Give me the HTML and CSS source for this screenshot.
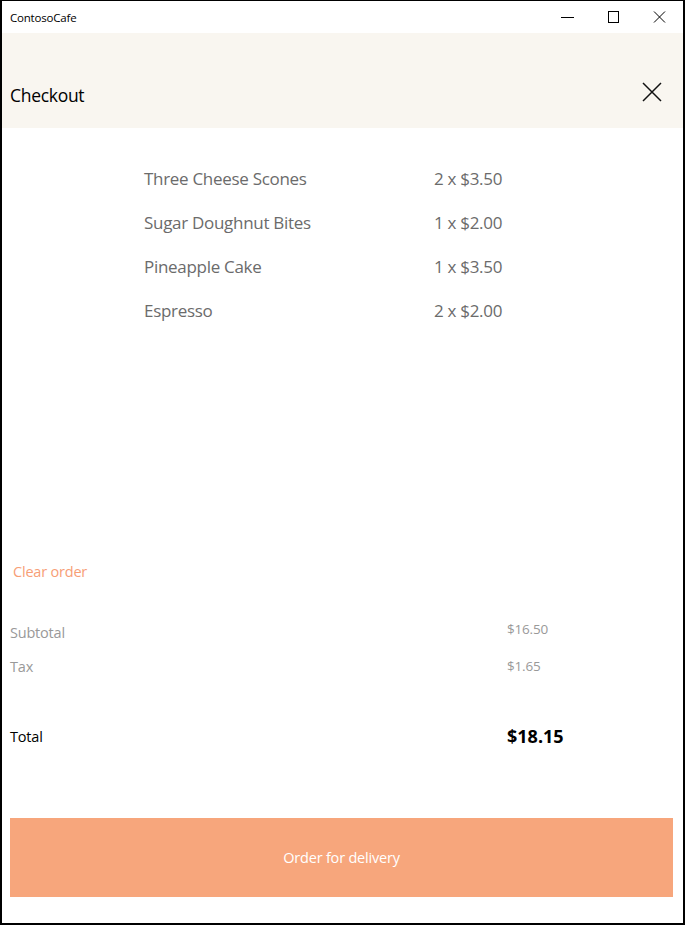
FILE: index.html
```html
<!DOCTYPE html>
<html>
<head>
<meta charset="utf-8">
<link rel="stylesheet" href="styles.css">
</head>
<body>
<div class="window">
  <div class="titlebar">
    <span class="app-name">ContosoCafe</span>
    <div class="controls">
      <svg class="ctl" width="46" height="32" viewBox="0 0 46 32"><line x1="16" y1="16.5" x2="29" y2="16.5" stroke="#000" stroke-width="1"/></svg>
      <svg class="ctl" width="46" height="32" viewBox="0 0 46 32"><rect x="17.5" y="10.5" width="10" height="11" fill="none" stroke="#000" stroke-width="1"/></svg>
      <svg class="ctl" width="46" height="32" viewBox="0 0 46 32"><path d="M17 10.5 L28 21.5 M28 10.5 L17 21.5" stroke="#000" stroke-width="1"/></svg>
    </div>
  </div>
  <div class="header">
    <span class="title">Checkout</span>
    <svg class="close" width="20" height="20" viewBox="0 0 20 20"><path d="M1 1 L19 19 M19 1 L1 19" stroke="#111" stroke-width="1.5"/></svg>
  </div>
  <div class="content">
    <div class="items">
      <div class="item"><span class="name">Three Cheese Scones</span><span class="qty">2 x $3.50</span></div>
      <div class="item"><span class="name">Sugar Doughnut Bites</span><span class="qty">1 x $2.00</span></div>
      <div class="item"><span class="name">Pineapple Cake</span><span class="qty">1 x $3.50</span></div>
      <div class="item"><span class="name">Espresso</span><span class="qty">2 x $2.00</span></div>
    </div>
    <div class="clear">Clear order</div>
    <div class="summary">
      <div class="row sub"><span class="label">Subtotal</span><span class="val up">$16.50</span></div>
      <div class="row sub"><span class="label">Tax</span><span class="val">$1.65</span></div>
      <div class="row total"><span class="label">Total</span><span class="val">$18.15</span></div>
    </div>
    <div class="order">Order for delivery</div>
  </div>
</div>
</body>
</html>
```
FILE: styles.css
```css
html, body {
  margin: 0;
  padding: 0;
  background: #fff;
}
.window {
  box-sizing: border-box;
  width: 685px;
  height: 925px;
  border-top: 1px solid #000;
  border-left: 2px solid #000;
  border-right: 2px solid #000;
  border-bottom: 2px solid #000;
  font-family: "Open Sans", "Noto Sans", sans-serif;
  display: flex;
  flex-direction: column;
  overflow: hidden;
}
.titlebar {
  height: 32px;
  display: flex;
  align-items: center;
  justify-content: space-between;
  background: #fff;
}
.app-name {
  font-size: 11.5px;
  color: #000;
  padding-left: 8px;
  letter-spacing: -0.2px;
}
.controls {
  display: flex;
  align-self: flex-start;
}
.ctl {
  display: block;
}
.header {
  box-sizing: border-box;
  height: 95px;
  background: #f9f6f0;
  display: flex;
  align-items: center;
  justify-content: space-between;
  padding: 28px 21px 0 8px;
}
.title {
  font-size: 17.5px;
  color: #000;
  letter-spacing: -0.3px;
}
.close {
  display: block;
  margin-top: -5px;
}
.content {
  flex: 1;
  display: flex;
  flex-direction: column;
  padding: 0 10px 0 8px;
}
.items {
  padding-top: 29px;
  padding-left: 134px;
  height: 429px;
  box-sizing: border-box;
}
.item {
  display: grid;
  grid-template-columns: 290px auto;
  height: 44px;
  line-height: 44px;
  font-size: 17px;
  color: #6b6b6b;
  letter-spacing: -0.3px;
}
.clear {
  font-size: 14.5px;
  color: #f79e76;
  padding-left: 3px;
  height: 30px;
  line-height: 30px;
  letter-spacing: -0.2px;
}
.summary {
  margin-top: 28px;
}
.row {
  display: grid;
  grid-template-columns: 497px auto;
  align-items: center;
}
.row.sub {
  height: 34px;
  font-size: 14.5px;
  color: #999;
  letter-spacing: -0.2px;
}
.row.sub .val {
  font-size: 13.5px;
}
.row.sub .val.up {
  position: relative;
  top: -3px;
}
.row.total {
  margin-top: 36px;
  height: 34px;
  font-size: 14.5px;
  color: #000;
  letter-spacing: -0.2px;
}
.row.total .val {
  font-size: 18px;
  font-weight: 700;
  letter-spacing: 0;
}
.order {
  margin-top: 65px;
  height: 79px;
  background: #f7a67c;
  color: #fff;
  display: flex;
  align-items: center;
  justify-content: center;
  font-size: 14.5px;
  letter-spacing: -0.2px;
}
```
